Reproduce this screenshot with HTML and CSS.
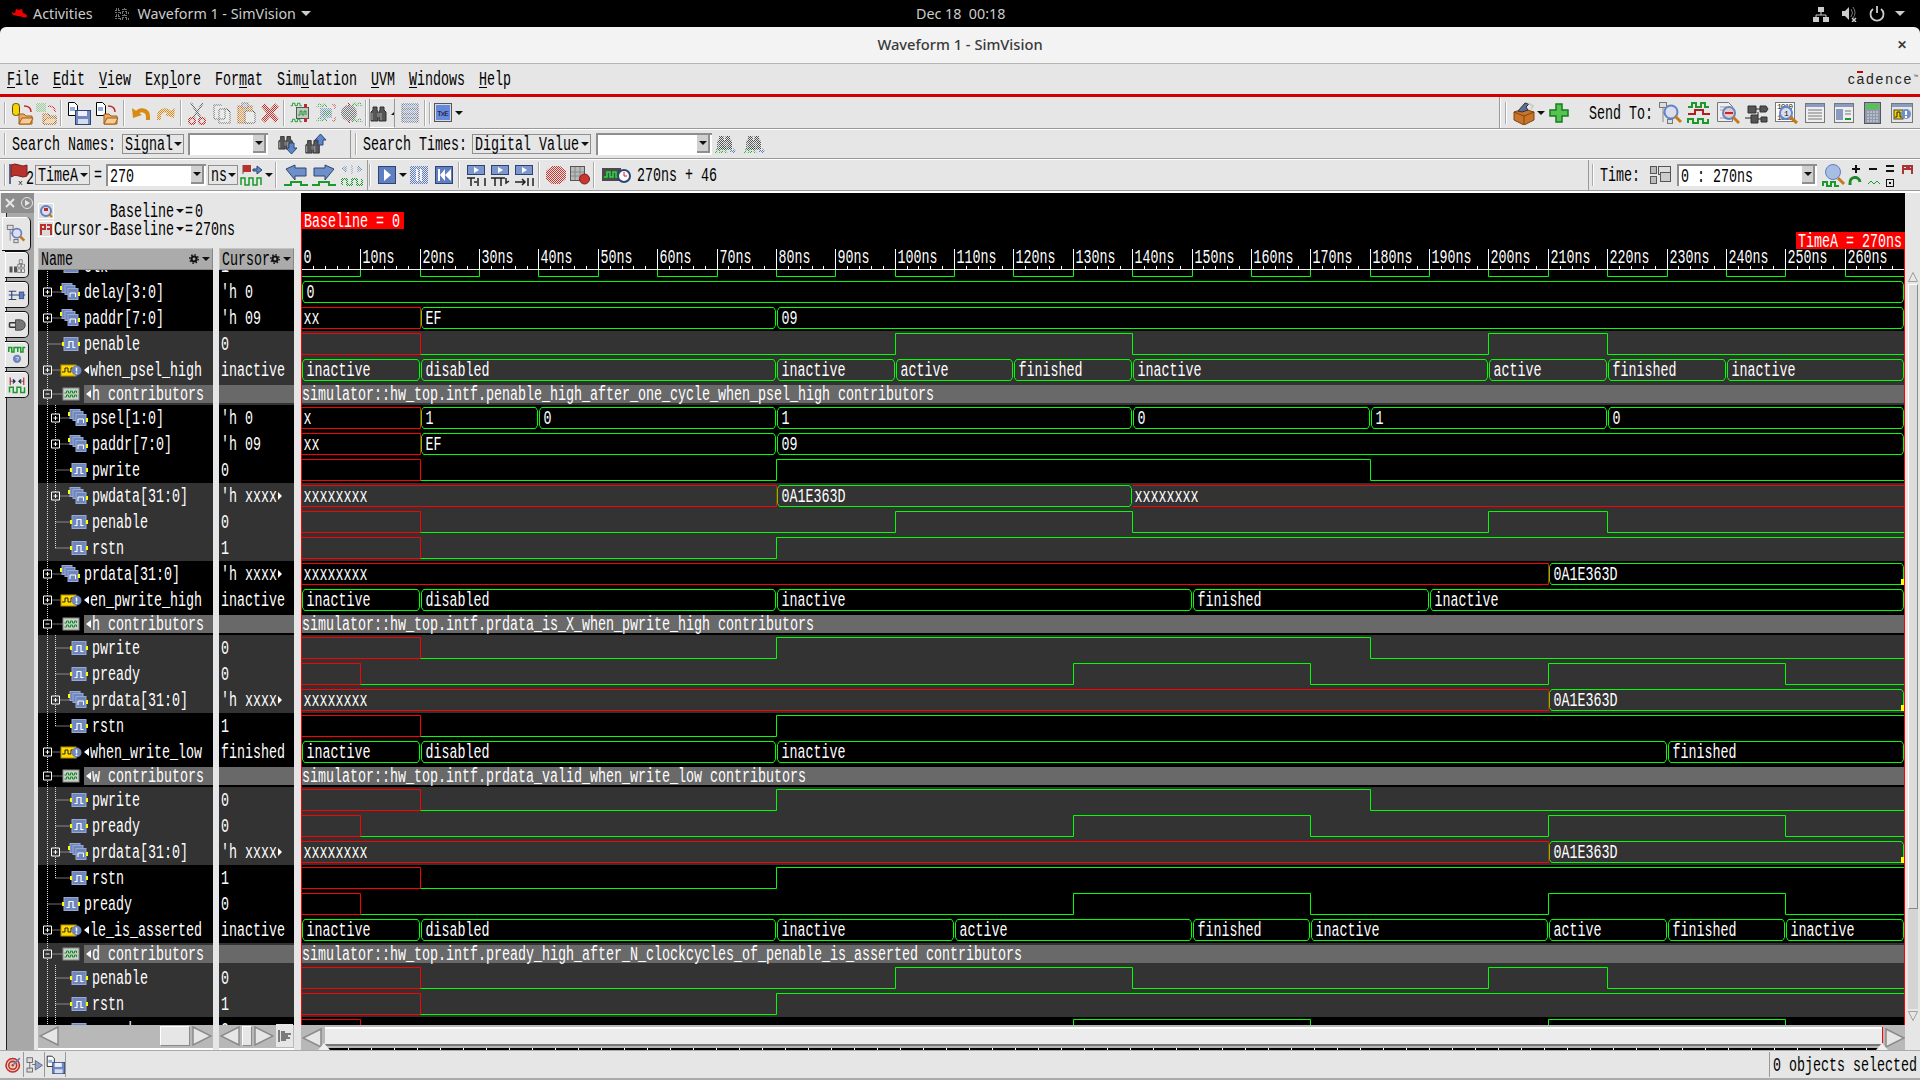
FILE: index.html
```html
<!DOCTYPE html>
<html lang="en">
<head>
    <meta charset="UTF-8">
    <title>Waveform 1 - SimVision</title>
    <link rel="stylesheet" href="styles.css">
</head>
<body>
<svg class="defs" width="0" height="0">
    <defs>
        <pattern id="chk" width="2" height="2" patternUnits="userSpaceOnUse"><rect width="1" height="1" fill="#e6e6e6"/><rect x="1" y="1" width="1" height="1" fill="#e6e6e6"/></pattern>
        <g id="folder"><path d="M9 13h5l2 2h6v8H9z" fill="#eeaa60" stroke="#9c5c18"/><path d="M9 23l3-6h11l-3 6z" fill="#f7cd95" stroke="#9c5c18"/></g>
        <g id="doc"><path d="M1.500 1.500h6l3 3v10h-9z" fill="#fff" stroke="#000"/><rect x="3" y="6" width="5" height="4" fill="#8fb0dc"/></g>
        <g id="binoc"><path d="M4 5h4v3l1 2v9H2v-9l2-2zM11 5h4v3l2 2v9h-7v-9l1-2z" fill="#555" stroke="#333"/><rect x="8" y="11" width="3" height="4" fill="#777"/><path d="M3 11v7M12 11v7" stroke="#aaa"/></g>
        <g id="wavelet"><path d="M1 6h3V2h4v4h4V2h4v4h3" fill="none" stroke="#1a9a2a" stroke-width="1.500"/></g>
    </defs>
    <symbol id="i-opendb" viewBox="0 0 24 24"><rect x="2.500" y="2.500" width="7" height="12" rx="3" fill="#f6d400" stroke="#5a4a10"/><path d="M14 5q7 0 7 6" fill="none" stroke="#c22" stroke-width="1.500"/><use href="#folder"/></symbol>
    <symbol id="i-opendb2" viewBox="0 0 24 24"><rect x="2" y="2" width="10" height="9" fill="#9c9"/><path d="M14 5q7 0 7 6" fill="none" stroke="#c22" stroke-width="1.500"/><use href="#folder"/><rect width="24" height="24" fill="url(#chk)"/></symbol>
    <symbol id="i-save" viewBox="0 0 24 24"><use href="#doc"/><rect x="8.500" y="9.500" width="15" height="14" fill="#7189c0" stroke="#2c4474"/><rect x="11" y="10" width="9" height="5" fill="#eef"/><rect x="11" y="18" width="10" height="5" fill="#d4dcee"/></symbol>
    <symbol id="i-opendoc" viewBox="0 0 24 24"><use href="#doc"/><path d="M13 5q7 0 7 6" fill="none" stroke="#c22" stroke-width="1.500"/><use href="#folder"/></symbol>
    <symbol id="i-undo" viewBox="0 0 24 24"><path d="M19 19v-4a6 6 0 0 0-11-3" fill="none" stroke="#d98a12" stroke-width="4"/><path d="M3 7l1 10 9-3z" fill="#d98a12"/></symbol>
    <symbol id="i-redo" viewBox="0 0 24 24"><path d="M5 19v-4a6 6 0 0 1 11-3" fill="none" stroke="#d98a12" stroke-width="4"/><path d="M21 7l-1 10-9-3z" fill="#d98a12"/><rect width="24" height="24" fill="url(#chk)"/></symbol>
    <symbol id="i-cut" viewBox="0 0 24 24"><path d="M6 2l10 15M18 2L8 17" stroke="#666" stroke-width="2"/><circle cx="7" cy="20" r="3" fill="none" stroke="#c22" stroke-width="2"/><circle cx="17" cy="20" r="3" fill="none" stroke="#c22" stroke-width="2"/><rect width="24" height="24" fill="url(#chk)"/></symbol>
    <symbol id="i-copy" viewBox="0 0 24 24"><path d="M4 4h8l3 3v11H4zM9 8h8l3 3v11H9z" fill="#eee" stroke="#555"/><rect width="24" height="24" fill="url(#chk)"/></symbol>
    <symbol id="i-paste" viewBox="0 0 24 24"><rect x="4" y="5" width="14" height="17" fill="#e79a4a" stroke="#a0611c"/><rect x="8" y="2" width="6" height="5" fill="#bbb" stroke="#666"/><path d="M11 10h8l2 2v10H11z" fill="#eee" stroke="#555"/><rect width="24" height="24" fill="url(#chk)"/></symbol>
    <symbol id="i-del" viewBox="0 0 24 24"><path d="M5 4l14 16M19 4L5 20" stroke="#c5302a" stroke-width="5"/><rect width="24" height="24" fill="url(#chk)"/></symbol>
    <symbol id="i-wavein" viewBox="0 0 24 24"><use href="#wavelet" transform="translate(0 1) scale(.62)"/><use href="#wavelet" transform="translate(0 17) scale(.62)"/><rect x="6.500" y="6.500" width="12" height="11" fill="#c4c8c4" stroke="#555"/><path d="M8 14h2v-4h2v4h2v-4h2v4" fill="none" stroke="#1a9a2a"/><rect x="14" y="3" width="3" height="3" fill="#c22"/><rect x="14" y="18" width="3" height="3" fill="#c22"/></symbol>
    <symbol id="i-wavemid" viewBox="0 0 24 24"><use href="#wavelet" transform="translate(2 2) scale(.6)"/><use href="#wavelet" transform="translate(2 16) scale(.6)"/><rect x="6" y="7" width="12" height="10" fill="#8fa0c8"/><path d="M8 14h2v-4h2v4h2v-4h2v4" fill="none" stroke="#1a9a2a"/><path d="M18 4h3v4M18 20h3v-4" fill="none" stroke="#c22"/><rect width="24" height="24" fill="url(#chk)"/></symbol>
    <symbol id="i-waveout" viewBox="0 0 24 24"><circle cx="10" cy="12" r="8" fill="#777"/><use href="#wavelet" transform="translate(12 1) scale(.6)"/><use href="#wavelet" transform="translate(12 17) scale(.6)"/><path d="M10 2v3M10 19v3" stroke="#c22" stroke-width="2"/><rect width="24" height="24" fill="url(#chk)"/></symbol>
    <symbol id="i-binoc" viewBox="0 0 24 24"><use href="#binoc" transform="translate(2 1)"/></symbol>
    <symbol id="i-grid" viewBox="0 0 24 24"><rect x="4" y="3" width="16" height="18" fill="#9db0cc" stroke="#667"/><path d="M4 8h16M4 13h16M4 17h16" stroke="#667"/><rect width="24" height="24" fill="url(#chk)"/></symbol>
    <symbol id="i-bdown" viewBox="0 0 24 24"><use href="#binoc" transform="translate(2 0) scale(.9)"/><path d="M14 11h5v5h3l-5.500 6-5.500-6h3z" fill="#5f86c6" stroke="#2c4474"/></symbol>
    <symbol id="i-bup" viewBox="0 0 24 24"><use href="#binoc" transform="translate(1 4) scale(.9)"/><path d="M15 13h5V8h3l-5.500-6L12 8h3z" fill="#5f86c6" stroke="#2c4474"/></symbol>
    <symbol id="i-bwd" viewBox="0 0 24 24"><use href="#binoc" transform="translate(2 0) scale(.9)"/><use href="#wavelet" transform="translate(0 16) scale(.7)"/><path d="M16 18h3v-2l3 3-3 3v-2h-3z" fill="#5f86c6"/><rect width="24" height="24" fill="url(#chk)"/></symbol>
    <symbol id="i-flagwave" viewBox="0 0 24 24"><path d="M3 2v9" stroke="#555"/><path d="M3 2h8v7H3z" fill="#b8312c"/><path d="M13 6h4V3l5 4-5 4V8h-4z" fill="#5f86c6" stroke="#2c4474"/><path d="M1 22v-7h4v7h4v-7h4v7h4v-7h4v7" fill="none" stroke="#1a9a2a" stroke-width="1.500"/></symbol>
    <symbol id="i-prev" viewBox="0 0 24 24"><path d="M2 4l9-4v3h11v8H11v4z" transform="translate(0 2)" fill="#6f8fc8" stroke="#2c4474"/><path d="M0 22h7v-3h10v3h7" fill="none" stroke="#1a9a2a" stroke-width="2"/></symbol>
    <symbol id="i-next" viewBox="0 0 24 24"><path d="M22 4l-9-4v3H2v8h11v4z" transform="translate(0 2)" fill="#6f8fc8" stroke="#2c4474"/><path d="M0 22h7v-3h10v3h7" fill="none" stroke="#1a9a2a" stroke-width="2"/></symbol>
    <symbol id="i-nextoff" viewBox="0 0 24 24"><path d="M2 6l4-3v6zM22 6l-4-3v6zM12 2v9" stroke="#5f86c6" fill="#9db0cc"/><path d="M2 22v-6h5v6h5v-6h5v6h5v-6" fill="none" stroke="#1a9a2a" stroke-width="2"/><rect width="24" height="24" fill="url(#chk)"/></symbol>
    <symbol id="i-play" viewBox="0 0 24 24"><rect x="3.500" y="3.500" width="17" height="17" fill="#5f7fc0" stroke="#2c4474"/><path d="M9 6l7 6-7 6z" fill="#fff"/></symbol>
    <symbol id="i-pause" viewBox="0 0 24 24"><rect x="3" y="3" width="18" height="18" fill="#5f7fc0"/><path d="M9 6h2v12H9zM13 6h2v12h-2z" fill="#fff"/><rect width="24" height="24" fill="url(#chk)"/></symbol>
    <symbol id="i-rew" viewBox="0 0 24 24"><rect x="3.500" y="3.500" width="17" height="17" fill="#5f7fc0" stroke="#2c4474"/><path d="M6 6h2v12H6zM13 6v12l-5-6zM19 6v12l-6-6z" fill="#fff"/></symbol>
    <symbol id="i-step1" viewBox="0 0 24 24"><rect x="3.500" y="2.500" width="17" height="9" fill="#7d97cc" stroke="#2c4474"/><path d="M10 4l5 3-5 3z" fill="#fff"/><path d="M3 15h8M7 15v8M14 15v8M21 15v8M10 19h3" stroke="#222" stroke-width="1.500"/></symbol>
    <symbol id="i-step2" viewBox="0 0 24 24"><rect x="3.500" y="2.500" width="17" height="9" fill="#7d97cc" stroke="#2c4474"/><path d="M10 4l5 3-5 3z" fill="#fff"/><path d="M3 15h14M7 15v8M13 15v8M18 15v5l3-2" stroke="#222" stroke-width="1.500" fill="none"/></symbol>
    <symbol id="i-step3" viewBox="0 0 24 24"><rect x="3.500" y="2.500" width="17" height="9" fill="#7d97cc" stroke="#2c4474"/><path d="M10 4l5 3-5 3z" fill="#fff"/><path d="M3 19h10M10 16l3 3-3 3M16 15v8M21 15v8" stroke="#222" stroke-width="1.500" fill="none"/></symbol>
    <symbol id="i-stop" viewBox="0 0 24 24"><path d="M8 3h8l6 5v8l-6 5H8l-6-5V8z" fill="#c9352f"/><rect width="24" height="24" fill="url(#chk)"/></symbol>
    <symbol id="i-bp" viewBox="0 0 24 24"><rect x="2.500" y="3.500" width="14" height="14" fill="#bbb" stroke="#555"/><path d="M7 4v13M12 4v13M3 9h13M3 13h13" stroke="#888"/><circle cx="16.500" cy="16" r="5" fill="#c9352f" stroke="#7a1e1c"/></symbol>
    <symbol id="i-simtime" viewBox="0 0 36 24"><rect x="2" y="5" width="19" height="13" fill="#4b4b4b"/><path d="M4 14h3v-5h3v5h3v-5h3v5h3" fill="none" stroke="#20e040" stroke-width="1.500"/><circle cx="24" cy="13" r="6" fill="#fff" stroke="#2c4474" stroke-width="2"/><path d="M24 9v4h3" stroke="#c22" fill="none"/></symbol>
    <symbol id="i-toolbox" viewBox="0 0 24 24"><path d="M2 11l10-3 10 3v8l-10 5-10-5z" fill="#c9742a" stroke="#7a4412"/><path d="M2 11l10 4 10-4M12 15v9" stroke="#7a4412" fill="none"/><path d="M6 10l7-8 4 1-3 3 2 3-6 2z" fill="#5d6d95" stroke="#333"/><path d="M16 2l5 3-2 3" stroke="#ccc" stroke-width="2" fill="none"/></symbol>
    <symbol id="i-plus" viewBox="0 0 24 24"><path d="M9 3h6v6h6v6h-6v6H9v-6H3V9h6z" fill="#52c44f" stroke="#1a7a22" stroke-width="1.500"/></symbol>
    <symbol id="i-s1" viewBox="0 0 24 24"><path d="M5 5v16M5 12h7" stroke="#888"/><rect x="1.500" y="1.500" width="7" height="5" fill="#ddd" stroke="#777"/><rect x="9.500" y="18.500" width="5" height="4" fill="#ddd" stroke="#777"/><circle cx="13" cy="11" r="6.500" fill="#dde" stroke="#5f86c6" stroke-width="2"/><path d="M17 15l6 6" stroke="#c47a1a" stroke-width="3"/></symbol>
    <symbol id="i-s2" viewBox="0 0 24 24"><path d="M1 6h4V2h4v4h5V2h4v4h4" fill="none" stroke="#1a9a2a" stroke-width="2"/><path d="M1 13h7V9h8v4h7" fill="none" stroke="#b02020" stroke-width="2"/><path d="M1 22v-4h5v4h5v-4h5v4h5v-4" fill="none" stroke="#1a9a2a" stroke-width="2"/></symbol>
    <symbol id="i-s3" viewBox="0 0 24 24"><path d="M1.500 1.500h11l4 4v15h-15z" fill="#eee" stroke="#777"/><path d="M4 6h7M4 9h9M4 17h6" stroke="#99a"/><circle cx="13" cy="12" r="6" fill="#e8c8c8" stroke="#5f86c6" stroke-width="2"/><path d="M9 12h8" stroke="#c22" stroke-width="2"/><path d="M17 16l6 6" stroke="#c47a1a" stroke-width="3"/></symbol>
    <symbol id="i-s4" viewBox="0 0 24 24"><path d="M3 5h8v7H3zM15 5h6l2 3-2 3h-6zM6 14h7v8H6zM16 16h6v5h-6z" fill="#555" stroke="#333"/><path d="M11 8h4M13 14v-3M0 17h6M13 18h3" stroke="#222"/></symbol>
    <symbol id="i-s6" viewBox="0 0 24 24"><rect x="2.500" y="2.500" width="19" height="19" fill="#eee" stroke="#777"/><rect x="3" y="3" width="18" height="3" fill="#8a9ac0"/><path d="M5 9h14M5 12h14M5 15h14M5 18h14" stroke="#777"/></symbol>
    <symbol id="i-s7" viewBox="0 0 24 24"><rect x="2.500" y="2.500" width="19" height="19" fill="#eee" stroke="#777"/><rect x="3" y="3" width="18" height="3" fill="#8a9ac0"/><rect x="4" y="8" width="7" height="11" fill="#8a9ac0"/><path d="M13 10h6M13 13h6M13 18h6" stroke="#777"/><path d="M13 18h6" stroke="#1a9a2a" stroke-width="2"/></symbol>
    <symbol id="i-s8" viewBox="0 0 24 24"><rect x="3.500" y="1.500" width="16" height="21" fill="#8f9aa8" stroke="#556"/><rect x="5" y="3" width="13" height="5" fill="#52c44f"/><path d="M6 11h11M6 14h11M6 17h11M6 20h11" stroke="#dde" stroke-dasharray="2 1"/></symbol>
    <symbol id="i-s9" viewBox="0 0 24 24"><rect x="1.500" y="2.500" width="21" height="19" fill="#e6e6e6" stroke="#777"/><rect x="2" y="3" width="20" height="3" fill="#8a9ac0"/><rect x="4" y="9" width="9" height="9" fill="#f6d400" stroke="#444"/><path d="M5 16h2v-5h3v5h2" fill="none" stroke="#222"/><circle cx="16" cy="13" r="5" fill="#6f8fc8"/><path d="M16 10v4M16 15v2" stroke="#fff" stroke-width="2"/></symbol>
    <symbol id="i-timeopt" viewBox="0 0 24 24"><rect x="2.500" y="3.500" width="6" height="7" fill="#bbb" stroke="#555"/><rect x="2.500" y="13.500" width="6" height="7" fill="#bbb" stroke="#555"/><rect x="10.500" y="3.500" width="12" height="8" fill="#ddd" stroke="#555"/><rect x="12.500" y="9.500" width="10" height="9" fill="#ccc" stroke="#555"/></symbol>
    <symbol id="i-zoom" viewBox="0 0 24 24"><circle cx="11" cy="9" r="7.500" fill="#a8bde4" stroke="#5f7fc0"/><path d="M16 15l6 6" stroke="#c47a1a" stroke-width="3"/><path d="M1 23v-4h4v4h4v-4h4v4h4" fill="none" stroke="#1a9a2a" stroke-width="2"/></symbol>
    <symbol id="i-zoomset" viewBox="0 0 72 24"><path d="M6 6h8M10 2v8M23 6h8M40 3h8M40 8h8" stroke="#111" stroke-width="2"/><path d="M57 2v9M57 3h4v3h-4" stroke="#a33" stroke-width="2" fill="none"/><path d="M66 2v9M66 3h-3v3h3" stroke="#a33" stroke-width="2" fill="none"/><path d="M4 22v-2a5 5 0 0 1 10-1" fill="none" stroke="#1a8a2a" stroke-width="3"/><path d="M22 21l3-3 3 3 3-3 3 3" fill="none" stroke="#1a9a2a"/><rect x="40.500" y="16.500" width="7" height="7" fill="none" stroke="#111"/><rect x="43" y="19" width="2" height="2" fill="#111"/></symbol>
    <symbol id="i-target" viewBox="0 0 24 24"><circle cx="11" cy="13" r="8.500" fill="#e8d0c0" stroke="#c0302a" stroke-width="2"/><circle cx="11" cy="13" r="5" fill="none" stroke="#c0302a" stroke-width="2"/><circle cx="11" cy="13" r="1.500" fill="#c0302a"/><path d="M12 12l8-8" stroke="#5f7fc0" stroke-width="2"/></symbol>
    <symbol id="i-netlink" viewBox="0 0 24 24"><rect x="2.500" y="3.500" width="7" height="6" fill="#ddd" stroke="#555"/><rect x="2.500" y="16.500" width="7" height="5" fill="#ddd" stroke="#555"/><path d="M6 10v7M9 12h6" stroke="#555"/><path d="M13 7l9 6-9 6z" fill="#8fa3cf" stroke="#556"/></symbol>
    <symbol id="i-sig" viewBox="0 0 24 24"><rect x="5" y="5.500" width="14" height="13" fill="#6f86bd" stroke="#98aad4"/><path d="M7.500 15.500h2.500v-6h4v6h2.500" fill="none" stroke="#fff" stroke-width="1.200"/><rect x="3" y="10" width="2" height="4" fill="#ff0"/><rect x="19" y="10" width="2" height="4" fill="#ff0"/></symbol>
    <symbol id="i-bus" viewBox="0 0 24 24"><rect x="4" y="3.500" width="10" height="9" fill="#6f86bd" stroke="#98aad4"/><rect x="7" y="5.500" width="10" height="9" fill="#6f86bd" stroke="#98aad4"/><rect x="10" y="8.500" width="10" height="11" fill="#6f86bd" stroke="#98aad4"/><path d="M12 17v-4h5.500v4" fill="none" stroke="#fff"/><rect x="2" y="6" width="2" height="4" fill="#ff0"/><rect x="20" y="12" width="2" height="4" fill="#ff0"/></symbol>
    <symbol id="i-assert" viewBox="0 0 24 24"><rect x="2" y="7" width="15" height="11" fill="#ffd800" stroke="#b89000"/><path d="M3 14h3v-4h3v4h3v-4h3v4" fill="none" stroke="#222"/><circle cx="17.500" cy="12.500" r="5" fill="#6f86bd"/><path d="M17.500 9.500v4M17.500 14.500v1.500" stroke="#fff" stroke-width="1.500"/></symbol>
    <symbol id="i-group" viewBox="0 0 24 24"><rect x="4" y="6" width="16" height="12" fill="#c9d0c9" stroke="#888"/><path d="M5.500 11h2v-2h2v2h2v-2h2v2h2v-2h2v2M5.500 15h2v-2h2v2h2v-2h2v2h2v-2h2v2" fill="none" stroke="#148a28"/></symbol>
    <symbol id="i-tab1" viewBox="0 0 24 24"><path d="M5 4v16M5 11h6" stroke="#777"/><rect x="1.500" y="1.500" width="7" height="5" fill="#ddd" stroke="#666"/><rect x="9.500" y="18.500" width="5" height="4" fill="#ddd" stroke="#666"/><circle cx="13" cy="11" r="5.500" fill="#dde" stroke="#5f7fc0" stroke-width="2"/><path d="M17 15l5 5" stroke="#c47a1a" stroke-width="3"/></symbol>
    <symbol id="i-tab2" viewBox="0 0 24 24"><path d="M2 14h4v8H2zM8 14h4v8H8z" fill="#555"/><path d="M13 11h4v4h-4zM18 11h4v4h-4zM13 17h4v5h-4zM18 17h4v5h-4zM15 5h4v5h-4z" fill="none" stroke="#666"/></symbol>
    <symbol id="i-tab3" viewBox="0 0 24 24"><path d="M1 7h10M1 12h22M1 18h10M5 7v11" stroke="#2c4474" stroke-width="1.500"/><rect x="15" y="8" width="6" height="9" fill="#5f7fc0" stroke="#2c4474"/></symbol>
    <symbol id="i-tab4" viewBox="0 0 24 24"><path d="M10 5h6a7 7 0 0 1 0 14h-6z" fill="#777" stroke="#333"/><path d="M2 9h8M2 15h8M2 9v6" stroke="#333" stroke-width="2"/></symbol>
    <symbol id="i-tab6" viewBox="0 0 24 24"><path d="M3 2v10M21 2v10" stroke="#c22" stroke-width="1.500"/><path d="M3 7h6M21 7h-6M10 7l-3-3v6zM14 7l3-3v6z" stroke="#2c4474"/><path d="M2 22v-7h5v7h5v-7h5v7h5v-7" fill="none" stroke="#1a9a2a" stroke-width="2"/></symbol>
    <symbol id="i-arrl" viewBox="0 0 20 20"><path d="M19 1L1 10l18 9z" fill="#e6e6e6" stroke="#8a8a8a" stroke-width="1.500"/></symbol>
    <symbol id="i-arrr" viewBox="0 0 20 20"><path d="M1 1l18 9-18 9z" fill="#e6e6e6" stroke="#8a8a8a" stroke-width="1.500"/></symbol>
    <symbol id="i-gear" viewBox="0 0 14 14"><circle cx="7" cy="7" r="3.500" fill="none" stroke="#111" stroke-width="3"/><circle cx="7" cy="7" r="6" fill="none" stroke="#111" stroke-width="2" stroke-dasharray="2 2.700"/></symbol>
    <symbol id="i-align" viewBox="0 0 14 14"><path d="M1 1v12M3 3h4M3 5h10M3 7h7M3 9h9M3 11h5" stroke="#111"/></symbol>
</svg>

<header class="topbar">
    <div class="tb-left">
        <svg class="hat" viewBox="0 0 16 12"><path d="M4 5l1-4 3 1 3-1 1 4c3 1 4 2 4 3 0 3-4 1-8 0-3 0-8-1-7-4 1 1 2 1 3 1z" fill="#e00"/></svg>
        <span>Activities</span>
        <svg class="appicon" viewBox="0 0 16 14"><path d="M1 6V2h3v4h4V2h3v4h4M1 12V8h3v4h4V8h3v4h4" fill="none" stroke="#999" stroke-dasharray="1 1" stroke-width="1.500"/></svg>
        <span>Waveform 1 - SimVision</span>
        <i class="dn dn-l"></i>
    </div>
    <div class="tb-clock">Dec 18&nbsp; 00:18</div>
    <div class="tb-right">
        <svg class="sys" viewBox="0 0 16 16"><path d="M5 1h6v5H5zM0 11h6v5H0zM10 11h6v5h-6z" fill="#ccc"/><path d="M8 6v3M3 11V9h10v2" fill="none" stroke="#ccc"/></svg>
        <svg class="sys" viewBox="0 0 16 16"><path d="M1 5h3l4-4v13l-4-4H1z" fill="#ccc"/><path d="M10 3q3 4 0 8M12 1q4 6 0 11" fill="none" stroke="#777"/><path d="M11 12l4 4M15 12l-4 4" stroke="#ccc" stroke-width="1.500"/></svg>
        <svg class="sys" viewBox="0 0 16 16"><path d="M4 3a6.500 6.500 0 1 0 8 0M8 0v7" fill="none" stroke="#ccc" stroke-width="1.800"/></svg>
        <i class="dn dn-l dn-sys"></i>
    </div>
</header>

<div class="titlebar">
    <span>Waveform 1 - SimVision</span>
    <span class="close">&#10005;</span>
</div>

<nav class="menubar">
    <span class="lab"><u>F</u>ile</span>
    <span class="lab"><u>E</u>dit</span>
    <span class="lab"><u>V</u>iew</span>
    <span class="lab">Exp<u>l</u>ore</span>
    <span class="lab">For<u>m</u>at</span>
    <span class="lab">Sim<u>u</u>lation</span>
    <span class="lab"><u>U</u>VM</span>
    <span class="lab"><u>W</u>indows</span>
    <span class="lab"><u>H</u>elp</span>
    <span class="logo">c<span class="logo-a">a</span>dence<sup>&trade;</sup></span>
</nav>
<div class="redline"></div>

<div class="tbar tbar-first">
    <div class="tgroup grow">
        <i class="handle"></i><i class="s4"></i>
        <svg class="ic"><use href="#i-opendb"/></svg><svg class="ic"><use href="#i-opendb2"/></svg>
        <i class="s2"></i><i class="sep"></i><i class="s5"></i>
        <svg class="ic"><use href="#i-save"/></svg><i class="s4"></i><svg class="ic"><use href="#i-opendoc"/></svg>
        <i class="s4"></i><i class="sep"></i><i class="s4"></i>
        <svg class="ic"><use href="#i-undo"/></svg><i class="s1"></i><svg class="ic"><use href="#i-redo"/></svg>
        <i class="s2"></i><i class="sep"></i><i class="s3"></i>
        <svg class="ic"><use href="#i-cut"/></svg><i class="s1"></i><svg class="ic"><use href="#i-copy"/></svg><svg class="ic"><use href="#i-paste"/></svg><svg class="ic"><use href="#i-del"/></svg>
        <i class="s1"></i><i class="sep"></i><i class="s5"></i>
        <svg class="ic"><use href="#i-wavein"/></svg><svg class="ic"><use href="#i-wavemid"/></svg><i class="s1"></i><svg class="ic"><use href="#i-waveout"/></svg>
        <i class="s2"></i><i class="sep"></i><i class="s2"></i>
        <span class="raised"><svg class="ic"><use href="#i-binoc"/></svg><i class="up"></i></span>
        <i class="s3"></i><svg class="ic"><use href="#i-grid"/></svg>
        <i class="s2"></i><i class="sep"></i><i class="s3"></i><i class="handle"></i>
        <svg class="ic" viewBox="0 0 24 24"><rect x="3.500" y="2.500" width="17" height="18" fill="#dbdbdb" stroke="#555"/><rect x="5" y="4" width="14" height="15" fill="#6688dd"/><text x="6" y="15" class="micro" textLength="12">TxE</text></svg><i class="dn"></i>
    </div>
    <div class="tgroup right-a">
        <i class="handle"></i><i class="s5"></i>
        <svg class="ic"><use href="#i-toolbox"/></svg><i class="s1"></i><i class="dn"></i><i class="s2"></i>
        <svg class="ic"><use href="#i-plus"/></svg><i class="s18"></i>
        <span class="lab">Send To:</span><i class="s5"></i>
        <div class="sendto">
            <svg class="ic"><use href="#i-s1"/></svg><svg class="ic"><use href="#i-s2"/></svg><svg class="ic"><use href="#i-s3"/></svg>
            <svg class="ic"><use href="#i-s4"/></svg>
            <svg class="ic" viewBox="0 0 24 24"><rect x="1.500" y="1.500" width="19" height="19" fill="#fff" stroke="#777"/><text x="3" y="8" class="micro" textLength="16">1010</text><text x="3" y="19" class="micro" textLength="16">1010</text><circle cx="12" cy="12" r="6" fill="#dde" stroke="#5f86c6" stroke-width="2"/><text x="10" y="15" class="micro" textLength="4">1</text><path d="M16 16l7 6" stroke="#c47a1a" stroke-width="3"/></svg>
            <svg class="ic"><use href="#i-s6"/></svg>
            <svg class="ic"><use href="#i-s7"/></svg><svg class="ic"><use href="#i-s8"/></svg><svg class="ic"><use href="#i-s9"/></svg>
        </div>
    </div>
</div>

<div class="tbar">
    <div class="tgroup gr-names">
        <i class="handle"></i><i class="s6"></i>
        <span class="lab">Search Names:</span><i class="s6"></i>
        <span class="sel w62"><span class="lab">Signal</span><i class="dn"></i></span><i class="s4"></i>
        <span class="combo w80"><span class="drop"><i class="dn"></i></span></span><i class="s7"></i>
        <svg class="ic"><use href="#i-bdown"/></svg><i class="s4"></i><svg class="ic"><use href="#i-bup"/></svg>
    </div>
    <div class="tgroup grow gr-times">
        <i class="handle"></i><i class="s6"></i>
        <span class="lab">Search Times:</span><i class="s5"></i>
        <span class="sel w119"><span class="lab">Digital Value</span><i class="dn"></i></span><i class="s5"></i>
        <span class="combo w116"><span class="drop"><i class="dn"></i></span></span><i class="s2"></i>
        <svg class="ic"><use href="#i-bwd"/></svg><i class="s5"></i><svg class="ic"><use href="#i-bwd"/></svg>
    </div>
</div>

<div class="tbar">
    <div class="tgroup gr-time">
        <i class="handle"></i><i class="s2"></i>
        <span class="flagbox">
            <svg class="ic" viewBox="0 0 24 24"><path d="M2 1v20" stroke="#5a6a90" stroke-width="2"/><path d="M3 2q4-2 8 0t8 0v11q-4 2-8 0t-8 1z" fill="#b8312c" stroke="#7a1e1c"/><text x="10" y="22" class="micro" textLength="6">x</text></svg>
            <span class="lab">2</span>
        </span>
        <span class="sel w55"><span class="lab">TimeA</span><i class="dn"></i></span><i class="s4"></i>
        <span class="lab">=</span><i class="s4"></i>
        <span class="combo w100"><span class="lab">270</span><span class="drop"><i class="dn"></i></span></span><i class="s2"></i>
        <span class="sel w30"><span class="lab">ns</span><i class="dn"></i></span><i class="s2"></i>
        <svg class="ic"><use href="#i-flagwave"/></svg><i class="s1"></i><i class="dn"></i>
        <i class="s2"></i><i class="sep"></i><i class="s7"></i>
        <svg class="ic"><use href="#i-prev"/></svg><i class="s4"></i><svg class="ic"><use href="#i-next"/></svg><i class="s4"></i><svg class="ic"><use href="#i-nextoff"/></svg>
    </div>
    <div class="tgroup grow flush">
        <i class="s1"></i><i class="handle"></i><i class="s4"></i>
        <svg class="ic"><use href="#i-play"/></svg><i class="dn"></i>
        <svg class="ic"><use href="#i-pause"/></svg><i class="s1"></i><svg class="ic"><use href="#i-rew"/></svg>
        <i class="s2"></i><i class="sep"></i><i class="s4"></i>
        <svg class="ic"><use href="#i-step1"/></svg><svg class="ic"><use href="#i-step2"/></svg><svg class="ic"><use href="#i-step3"/></svg>
        <i class="s2"></i><i class="sep"></i><i class="s4"></i>
        <svg class="ic"><use href="#i-stop"/></svg><svg class="ic"><use href="#i-bp"/></svg>
        <i class="s1"></i><i class="sep"></i><i class="s5"></i>
        <svg class="ic w36"><use href="#i-simtime"/></svg><i class="s1"></i>
        <span class="lab">270ns + 46</span>
    </div>
    <div class="tgroup right-b">
        <i class="s3"></i><i class="handle"></i><i class="s6"></i>
        <span class="lab">Time:</span><i class="s8"></i>
        <svg class="ic"><use href="#i-timeopt"/></svg><i class="s5"></i>
        <span class="combo w140"><span class="lab">0 : 270ns</span><span class="drop"><i class="dn"></i></span></span><i class="s5"></i>
        <svg class="ic"><use href="#i-zoom"/></svg>
        <svg class="ic w72"><use href="#i-zoomset"/></svg>
    </div>
</div>

<main class="main">
    <aside class="tabs">
        <div class="tabs-top">
            <svg viewBox="0 0 30 16" class="tabs-ctl"><path d="M3 4l8 8M11 4l-8 8" stroke="#e6e6e6" stroke-width="2"/><circle cx="24" cy="8" r="5.500" fill="none" stroke="#e6e6e6"/><path d="M22 5l5 3-5 3z" fill="#e6e6e6"/></svg>
        </div>
        <div class="tab active"><svg class="ic"><use href="#i-tab1"/></svg></div>
        <div class="tab"><svg class="ic"><use href="#i-tab2"/></svg></div>
        <div class="tab"><svg class="ic"><use href="#i-tab3"/></svg></div>
        <div class="tab"><svg class="ic"><use href="#i-tab4"/></svg></div>
        <div class="tab">
            <svg class="ic" viewBox="0 0 24 24"><path d="M1 8V2h4v6h3V2h4M13 8V2h4v6h3V2h3" fill="none" stroke="#1a9a2a" stroke-width="2"/><circle cx="12" cy="17" r="5.500" fill="#6f86bd"/><text x="10" y="20" class="micro light">?</text></svg>
        </div>
        <div class="tab"><svg class="ic"><use href="#i-tab6"/></svg></div>
    </aside>

    <section class="signals">
        <div class="cursors">
            <div class="cur-row">
                <i class="curicon"><svg viewBox="0 0 14 14"><circle cx="7" cy="7" r="5" fill="#dde" stroke="#5f7fc0" stroke-width="2"/><path d="M5 4h4v3H5z" fill="#b8312c"/><path d="M10 10l3 3" stroke="#c47a1a" stroke-width="2"/></svg></i>
                <span class="cur-name"><span class="lab">Baseline</span></span><i class="dn"></i><span class="lab">=</span><i class="s2"></i><span class="lab">0</span>
            </div>
            <div class="cur-row">
                <i class="curicon"><svg viewBox="0 0 14 14"><path d="M2 2v11M2 3h4v4H2M8 3h4v4H8M12 3v10" fill="none" stroke="#b8312c" stroke-width="2"/></svg></i>
                <span class="cur-name"><span class="lab">Cursor-Baseline</span></span><i class="dn"></i><span class="lab">=</span><i class="s2"></i><span class="lab">270ns</span>
            </div>
        </div>
        <div class="lists">
            <div class="col col-name">
                <div class="col-head"><span class="lab">Name</span><svg class="gear"><use href="#i-gear"/></svg><i class="dn"></i></div>
                <div class="col-body" id="names"></div>
                <div class="hscroll">
                    <svg class="arrow"><use href="#i-arrl"/></svg>
                    <span class="fill"></span>
                    <span class="thumb"></span>
                    <svg class="arrow"><use href="#i-arrr"/></svg>
                </div>
            </div>
            <div class="col col-cursor">
                <div class="col-head"><span class="lab">Cursor</span><svg class="gear"><use href="#i-gear"/></svg><i class="dn"></i></div>
                <div class="col-body" id="values"></div>
                <div class="hscroll">
                    <svg class="arrow"><use href="#i-arrl"/></svg>
                    <span class="thumb thumb-s"></span>
                    <svg class="arrow"><use href="#i-arrr"/></svg>
                    <span class="alignbtn"><svg class="gear"><use href="#i-align"/></svg></span>
                </div>
            </div>
        </div>
    </section>

    <section class="waves">
        <div class="ruler" id="ruler">
            <span class="flagbar baseline"><span class="lab">Baseline = 0</span></span>
            <span class="flagbar timea"><span class="lab">TimeA = 270ns</span></span>
        </div>
        <div class="wave-body" id="waves"></div>
        <div class="hscroll wave-scroll">
            <svg class="arrow"><use href="#i-arrl"/></svg>
            <span class="wave-thumb"></span>
            <svg class="arrow"><use href="#i-arrr"/></svg>
            <i class="wave-ticks"></i>
            <i class="range-mark mark-l"></i>
            <i class="range-mark mark-r"></i>
        </div>
        <i class="vline vline-base"></i>
        <i class="vline vline-cursor"></i>
        <i class="vline vline-range"></i>
    </section>

    <div class="vscroll">
        <svg class="varrow"><use href="#i-arrr"/></svg>
        <span class="vthumb"></span>
        <span class="vtrack"></span>
        <svg class="varrow varrow-dn"><use href="#i-arrr"/></svg>
    </div>
</main>

<footer class="status">
    <span class="st-cell"><svg class="ic"><use href="#i-target"/></svg></span>
    <span class="st-cell"><svg class="ic"><use href="#i-netlink"/></svg></span>
    <span class="st-cell"><svg class="ic"><use href="#i-save"/></svg></span>
    <span class="st-msg"><span class="lab">0 objects selected</span></span>
</footer>

<script src="waves.js"></script>
</body>
</html>
```

FILE: styles.css
```css
* {
    box-sizing: border-box;
}

body {
    margin: 0;
    width: 1920px;
    height: 1080px;
    overflow: hidden;
    background-color: #000;
    font-family: "Liberation Mono", monospace;
    color: #000;
}

i {
    display: block;
    flex: none;
}

u {
    text-decoration-thickness: 1px;
    text-underline-offset: 2px;
}

.defs {
    position: absolute;
}

.micro {
    font: 8px "Liberation Mono", monospace;
    fill: #111;
}

.light {
    fill: #fff;
}

/* every label is a tall narrow 8px-per-character cell, width is set in waves.js */
.lab {
    display: inline-block;
    flex: none;
    font-size: 20px;
    line-height: 20px;
    white-space: pre;
    transform: translateY(1px) scaleX(0.6665);
    transform-origin: 0 50%;
}

/* spacers */
.s1 { width: 1px; }
.s2 { width: 2px; }
.s3 { width: 3px; }
.s4 { width: 4px; }
.s5 { width: 5px; }
.s6 { width: 6px; }
.s7 { width: 7px; }
.s8 { width: 8px; }
.s18 { width: 18px; }

.dn {
    width: 0;
    height: 0;
    border-left: 4px solid transparent;
    border-right: 4px solid transparent;
    border-top: 4px solid #111;
}

.up {
    width: 0;
    height: 0;
    border-left: 4px solid transparent;
    border-right: 4px solid transparent;
    border-bottom: 4px solid #111;
}

.topbar {
    height: 27px;
    display: flex;
    align-items: center;
    justify-content: space-between;
    position: relative;
    color: #ccc;
    font: 14.3px "Noto Sans", sans-serif;
}

.tb-left {
    display: flex;
    align-items: center;
    padding-left: 11px;
}

.hat {
    width: 16px;
    height: 12px;
    margin-right: 6px;
}

.appicon {
    width: 16px;
    height: 14px;
    margin: 0 7px 0 22px;
}

.dn-l {
    border-top-color: #ccc;
    border-left-width: 5px;
    border-right-width: 5px;
    border-top-width: 5px;
    margin-left: 5px;
}

.dn-sys {
    margin-left: -2px;
}

.tb-clock {
    position: absolute;
    left: 916px;
}

.tb-right {
    display: flex;
    align-items: center;
    gap: 12px;
    padding-right: 15px;
}

.sys {
    width: 16px;
    height: 16px;
}

.titlebar {
    height: 37px;
    display: flex;
    align-items: center;
    justify-content: center;
    position: relative;
    padding-bottom: 2px;
    background-color: #f3f3f3;
    border-bottom: 1px solid #b4b4b0;
    border-radius: 6px 6px 0 0;
    color: #3a3a3a;
    font: 500 14.7px "Noto Sans", sans-serif;
}

.close {
    position: absolute;
    right: 13px;
    font-size: 12px;
    font-weight: 700;
}

.menubar {
    height: 30px;
    display: flex;
    align-items: center;
    gap: 14px;
    padding-left: 7px;
    background-color: #e6e6e6;
}

.logo {
    margin-left: auto;
    padding-right: 0;
    font: 14px "Liberation Sans", sans-serif;
    letter-spacing: 1.8px;
    color: #222;
}

.logo sup {
    font-size: 5px;
}

.logo-a {
    position: relative;
}

.logo-a::before {
    content: "";
    position: absolute;
    left: 1px;
    right: 3px;
    top: 0;
    height: 2px;
    background-color: #c00;
}

.redline {
    height: 3px;
    background-color: #d40000;
}

.tbar {
    height: 30px;
    display: flex;
    background-color: #e6e6e6;
    border-top: 1px solid #fff;
    border-bottom: 1px solid #999;
}

.tbar-first {
    height: 32px;
    border-top: 0;
}

.tbar:last-of-type {
    height: 32px;
}

.tgroup {
    display: flex;
    align-items: center;
    flex: none;
    border-right: 1px solid #999;
    padding-left: 4px;
}

.grow {
    flex: 1;
    min-width: 0;
}

.flush {
    padding-left: 0;
    border-right: 0;
}

.right-a {
    width: 420px;
    border-left: 1px solid #fff;
    border-right: 0;
}

.right-b {
    width: 332px;
    padding-left: 0;
    border-left: 1px solid #999;
    border-right: 0;
}

.gr-names {
    width: 351px;
}

.gr-times {
    border-right: 0;
}

.gr-time {
    width: 368px;
}

.ic {
    display: block;
    flex: none;
    width: 24px;
    height: 24px;
}

.w36 { width: 36px; }
.w72 { width: 72px; }

.handle {
    width: 2px;
    height: 22px;
    background-color: #aaa;
    border-right: 1px solid #fff;
}

.sep {
    width: 2px;
    height: 26px;
    background-color: #aaa;
    border-right: 1px solid #fff;
}

.raised {
    display: flex;
    align-items: center;
    width: 26px;
    height: 30px;
    border: 1px solid;
    border-color: #fff #999 #fff #999;
    overflow: hidden;
}

.raised .ic {
    margin-left: -3px;
}

.sendto {
    display: flex;
    gap: 5px;
}

.flagbox {
    display: flex;
    align-items: center;
    width: 27px;
}

.flagbox .lab {
    margin: 6px 0 0 -6px;
}

.sel {
    display: flex;
    align-items: center;
    height: 20px;
    padding-left: 2px;
    border: 1px solid #8f8f8f;
    position: relative;
}

.sel .dn {
    position: absolute;
    right: 1px;
}

.w30 { width: 30px; }
.w55 { width: 55px; }
.w62 { width: 62px; }
.w119 { width: 119px; }

.combo {
    display: flex;
    align-items: center;
    height: 22px;
    padding-left: 2px;
    background-color: #fff;
    border-top: 2px solid #8f8f8f;
    border-left: 2px solid #8f8f8f;
    position: relative;
}

.w80 { width: 80px; }
.w100 { width: 100px; }
.w116 { width: 116px; }
.w140 { width: 140px; }

.drop {
    position: absolute;
    right: 2px;
    top: 0;
    width: 13px;
    height: 18px;
    display: flex;
    align-items: center;
    justify-content: center;
    background-color: #d0d0d0;
    border-right: 2px solid #8f8f8f;
    border-bottom: 2px solid #8f8f8f;
}

.main {
    height: 859px;
    display: flex;
    border-top: 2px solid #fff;
    background-color: #e6e6e6;
}

.tabs {
    width: 34px;
    flex: none;
    background: linear-gradient(to right, #e6e6e6 0 6px, #222 6px 7px, #a8a8a8 7px);
}

.tabs-top {
    height: 20px;
    margin-left: 1px;
    margin-bottom: 4px;
    background-color: #8e8e8e;
    display: flex;
    align-items: center;
    justify-content: center;
}

.tabs-ctl {
    width: 30px;
    height: 16px;
}

.tab {
    width: 24px;
    height: 27px;
    margin: 0 0 3px 5px;
    display: flex;
    align-items: center;
    justify-content: center;
    background-color: #e6e6e6;
    border: 1px solid #111;
    border-left: 0;
    border-radius: 0 5px 5px 0;
    box-shadow: inset 1px 1px 0 #fff;
}

.tab .ic {
    width: 18px;
    height: 18px;
}

.tab.active {
    width: 29px;
    height: 34px;
    margin: 0 0 0 2px;
    border-top: 0;
}

.tab.active .ic {
    width: 20px;
    height: 20px;
}

.signals {
    width: 267px;
    flex: none;
    padding-left: 4px;
}

.cursors {
    height: 55px;
    padding-top: 9px;
}

.cur-row {
    height: 18px;
    display: flex;
    align-items: center;
}

.curicon {
    width: 16px;
    height: 16px;
    background-color: #dcdcdc;
    border: 1px solid #fff;
    flex: none;
}

.curicon svg {
    display: block;
    width: 14px;
    height: 14px;
}

.cur-name {
    width: 120px;
    display: flex;
    justify-content: flex-end;
}

.cur-row .dn {
    margin: 0 1px 0 2px;
}

.lists {
    display: flex;
    gap: 6px;
}

.col-name {
    width: 175px;
}

.col-cursor {
    width: 75px;
}

.col-head {
    height: 22px;
    display: flex;
    align-items: center;
    padding-left: 2px;
    background-color: #ababab;
    border: 1px solid #c4c4c4;
    border-right-color: #888;
    border-bottom-color: #888;
}

.gear {
    width: 10px;
    height: 10px;
    flex: none;
    margin-left: auto;
}

.col-head .dn {
    margin: 0 2px 0 3px;
}

.col-body {
    height: 755px;
    overflow: hidden;
    background-color: #000;
    color: #fff;
}

.row {
    display: flex;
    align-items: center;
    height: 26px;
    background-color: #000;
}

.row.alt {
    background-color: #333;
}

.row.grp {
    height: 22px;
    align-items: stretch;
}

.row.first {
    margin-top: -17px;
}

.tree {
    display: block;
    flex: none;
    height: 100%;
}

.tree .dots {
    stroke: #ddd;
    stroke-dasharray: 1 1;
    fill: none;
}

.tree .box {
    stroke: #fff;
}

.fill-blk {
    fill: #000;
}

.fill-alt {
    fill: #333;
}

.more {
    width: 0;
    height: 0;
    margin-right: 1px;
    border-top: 4px solid transparent;
    border-bottom: 4px solid transparent;
    border-right: 5px solid #fff;
}

.more.r {
    margin: 0 0 0 1px;
    border-right: 0;
    border-left: 4px solid #fff;
}

.bar {
    flex: 1;
    min-width: 0;
    height: 18px;
    margin: 2px 0;
    display: flex;
    align-items: center;
    padding-left: 2px;
    background-color: #696969;
}

.val {
    padding-left: 2px;
}

.hscroll {
    height: 25px;
    display: flex;
    align-items: center;
    gap: 2px;
    padding: 0 1px 2px;
    background-color: #b8b8b8;
    border-bottom: 2px solid #fff;
}

.arrow {
    display: block;
    flex: none;
    width: 20px;
    height: 20px;
}

.fill {
    flex: 1;
}

.thumb {
    width: 30px;
    height: 20px;
    flex: none;
    background-color: #e6e6e6;
    border: 1px solid #8a8a8a;
    border-top-color: #fff;
    border-left-color: #fff;
}

.thumb-s {
    width: 10px;
}

.alignbtn {
    width: 19px;
    height: 23px;
    margin-left: auto;
    display: flex;
    align-items: center;
    background-color: #e6e6e6;
}

.alignbtn .gear {
    width: 14px;
    height: 14px;
    margin: 0 auto;
}

.waves {
    width: 1604px;
    flex: none;
    position: relative;
}

.ruler {
    height: 77px;
    position: relative;
    background-color: #000;
}

.ruler svg {
    display: block;
}

.wave-text {
    font: 20px "Liberation Mono", monospace;
    fill: #fff;
}

.flagbar {
    position: absolute;
    display: flex;
    align-items: center;
    height: 17px;
    padding-left: 2px;
    background-color: #f00;
    color: #fff;
}

.baseline {
    left: 1px;
    top: 19px;
    width: 102px;
}

.timea {
    right: 0;
    top: 39px;
    width: 109px;
}

.wave-body {
    height: 755px;
    overflow: hidden;
    background-color: #000;
}

.wrow {
    display: block;
    height: 26px;
    background-color: #000;
}

.wrow.alt {
    background-color: #333;
}

.wrow.grp {
    height: 22px;
}

.wrow.first {
    margin-top: -17px;
}

.wave-scroll {
    gap: 3px;
    border-bottom: 0;
    padding: 1px 0 0 1px;
    position: relative;
}

.wave-thumb {
    flex: 1;
    height: 19px;
    margin-bottom: 3px;
    background-color: #ececec;
    border-top: 2px solid #fff;
    border-bottom: 2px solid #777;
}

.wave-ticks {
    position: absolute;
    left: 24px;
    right: 22px;
    bottom: 0;
    height: 2px;
    background: repeating-linear-gradient(to right, #fff 0 1px, #000 1px 23px);
}

.range-mark {
    position: absolute;
    bottom: 0;
    width: 0;
    height: 0;
    border-left: 6px solid transparent;
    border-right: 6px solid transparent;
    border-bottom: 7px solid #eee;
}

.mark-l {
    left: 17px;
}

.mark-r {
    left: 1575px;
}

.vline {
    position: absolute;
    width: 1px;
    background-color: #f00;
}

.vline-base {
    left: 0;
    top: 19px;
    height: 813px;
}

.vline-cursor {
    left: 1603px;
    top: 55px;
    height: 777px;
}

.vline-range {
    left: 1581px;
    top: 834px;
    height: 16px;
}

.vscroll {
    width: 15px;
    flex: none;
    padding: 77px 0 27px 3px;
    display: flex;
    flex-direction: column;
    align-items: flex-start;
}

.varrow {
    display: block;
    width: 10px;
    height: 14px;
    flex: none;
    transform: rotate(-90deg);
}

.varrow-dn {
    transform: rotate(90deg);
}

.vthumb {
    width: 10px;
    height: 625px;
    flex: none;
    background-color: #dcdcdc;
    border: 1px solid #8a8a8a;
    border-top-color: #fff;
    border-left-color: #fff;
}

.vtrack {
    flex: 1;
    width: 10px;
    background-color: #d4d4d4;
}

.status {
    height: 30px;
    display: flex;
    align-items: center;
    padding-left: 3px;
    background-color: #e6e6e6;
    border-top: 1px solid #aaa;
    border-bottom: 2px solid #aaa;
}

.st-cell {
    width: 21px;
    height: 25px;
    display: flex;
    align-items: center;
    justify-content: center;
    border-right: 1px solid #999;
}

.st-cell .ic {
    width: 19px;
    height: 19px;
}

.st-msg {
    width: 151px;
    height: 25px;
    margin-left: auto;
    padding-left: 3px;
    display: flex;
    align-items: center;
    border-left: 1px solid #999;
}
```

FILE: waves.js
```js
const NS = 5.937;
const X = t => Math.round(t * NS) + 0.5;
const W = 1604;

const PADDR = [['xx', 20], ['EF', 80], ['09', 270]];
const PENABLE = [['x', 20], [0, 100], [1, 140], [0, 200], [1, 220], [0, 270]];
const PWRITE = [['x', 20], [0, 80], [1, 180], [0, 270]];
const PREADY = [['x', 10], [0, 130], [1, 170], [0, 210], [1, 250], [0, 270]];
const RSTN = [['x', 20], [0, 80], [1, 270]];
const PRDATA = [['xxxxxxxx', 210], ['0A1E363D', 270]];

const CLK = [];
for (let t = 0; t < 270; t += 10) CLK.push([(t / 10) % 2, t + 10]);

const sig = (name, lvl, value, wave, last) => ({ type: 'sig', name, lvl, value, wave, last });
const bus = (name, lvl, value, wave, last, mark) => ({ type: 'bus', name, lvl, value, wave, last, mark, box: true });
const chk = (name, value, wave) => ({ type: 'assert', name, lvl: 0, value, wave, box: true });
const grp = (name, text) => ({ type: 'group', name, lvl: 0, text, box: true });

const rows = [
    sig('clk', 0, '1', CLK),
    bus('delay[3:0]', 0, "'h 0", [['0', 270]]),
    bus('paddr[7:0]', 0, "'h 09", PADDR),
    sig('penable', 0, '0', PENABLE),
    chk('when_psel_high', 'inactive', [['inactive', 20], ['disabled', 80], ['inactive', 100], ['active', 120], ['finished', 140], ['inactive', 200], ['active', 220], ['finished', 240], ['inactive', 270]]),
    grp('h contributors', 'simulator::hw_top.intf.penable_high_after_one_cycle_when_psel_high contributors'),
    bus('psel[1:0]', 1, "'h 0", [['x', 20], ['1', 40], ['0', 80], ['1', 140], ['0', 180], ['1', 220], ['0', 270]]),
    bus('paddr[7:0]', 1, "'h 09", PADDR),
    sig('pwrite', 1, '0', PWRITE),
    bus('pwdata[31:0]', 1, "'h xxxx>", [['xxxxxxxx', 80], ['0A1E363D', 140], ['xxxxxxxx', 270]]),
    sig('penable', 1, '0', PENABLE),
    sig('rstn', 1, '1', RSTN, true),
    bus('prdata[31:0]', 0, "'h xxxx>", PRDATA, false, true),
    chk('en_pwrite_high', 'inactive', [['inactive', 20], ['disabled', 80], ['inactive', 150], ['finished', 190], ['inactive', 270]]),
    grp('h contributors', 'simulator::hw_top.intf.prdata_is_X_when_pwrite_high contributors'),
    sig('pwrite', 1, '0', PWRITE),
    sig('pready', 1, '0', PREADY),
    bus('prdata[31:0]', 1, "'h xxxx>", PRDATA, false, true),
    sig('rstn', 1, '1', RSTN, true),
    chk('when_write_low', 'finished', [['inactive', 20], ['disabled', 80], ['inactive', 230], ['finished', 270]]),
    grp('w contributors', 'simulator::hw_top.intf.prdata_valid_when_write_low contributors'),
    sig('pwrite', 1, '0', PWRITE),
    sig('pready', 1, '0', PREADY),
    bus('prdata[31:0]', 1, "'h xxxx>", PRDATA, false, true),
    sig('rstn', 1, '1', RSTN, true),
    sig('pready', 0, '0', PREADY),
    chk('le_is_asserted', 'inactive', [['inactive', 20], ['disabled', 80], ['inactive', 110], ['active', 150], ['finished', 170], ['inactive', 210], ['active', 230], ['finished', 250], ['inactive', 270]]),
    grp('d contributors', 'simulator::hw_top.intf.pready_high_after_N_clockcycles_of_penable_is_asserted contributors'),
    sig('penable', 1, '0', PENABLE),
    sig('rstn', 1, '1', RSTN),
    sig('pready', 1, '0', PREADY)
];

const txt = (x, y, s) => `<text class="wave-text" x="${x}" y="${y}" textLength="${s.length * 8}" lengthAdjust="spacingAndGlyphs" xml:space="preserve">${s}</text>`;
const lab = s => `<span class="lab">${s}</span>`;

function digital(wave) {
    let red = '', green = '', from = 0, level = null;
    wave.forEach(([v, end]) => {
        const a = X(from), b = X(end);
        if (v === 'x') {
            red += `M${a} 2.500H${b}V23.500H${a}`;
        } else {
            const y = v ? 2.5 : 23.5;
            if (level !== null && level !== v) green += `M${a} 2.500V23.500`;
            green += `M${a} ${y}H${b}`;
            level = v;
        }
        from = end;
    });
    return `<path d="${red}" fill="none" stroke="#f00"/><path d="${green}" fill="none" stroke="#0f0"/>`;
}

function buses(wave) {
    let s = '', from = 0;
    wave.forEach(([v, end]) => {
        const a = X(from), b = X(end);
        if (v[0] === 'x') {
            s += `<path d="M${a} 2.500H${b}V23.500H${a}" fill="none" stroke="#f00"/>` + txt(a + 2, 19, v);
        } else {
            s += `<path d="M${a + 3} 2.500H${b - 3}L${b - 1} 5.500V20.500L${b - 3} 23.500H${a + 3}L${a + 1} 20.500V5.500Z" fill="none" stroke="#0f0"/>` + txt(a + 5, 19, v);
        }
        from = end;
    });
    return s;
}

function wave(r) {
    if (r.type === 'group') return txt(1, 17, r.text);
    const drawn = r.type === 'sig' ? digital(r.wave) : buses(r.wave);
    const mark = r.mark ? `<rect x="${W - 4}" y="18" width="4" height="6" fill="#ff0"/>` : '';
    return drawn + mark;
}

function tree(r, h) {
    const m = h / 2, base = 9.5, kid = 17.5;
    const at = r.lvl ? kid : base;
    const icon = { sig: 'i-sig', bus: 'i-bus', assert: 'i-assert', group: 'i-group' }[r.type];
    const iconX = (r.type === 'bus' ? 20 : 21) + r.lvl * 8;
    let d = `M${base} 0V${h}`;
    if (r.lvl) d += `M${kid} 0V${r.last ? m : h}`;
    d += `M${at} ${m}H${iconX + 4}`;
    let box = '';
    if (r.box) {
        const sign = r.type === 'group' ? '' : `M${at} ${m - 2}V${m + 2}`;
        box = `<rect x="${at - 4}" y="${m - 4}" width="8" height="8" class="${r.bg}"/><path class="box" d="M${at - 4} ${m - 4}h8v8h-8zM${at - 2} ${m}h4${sign}" fill="none"/>`;
    }
    const w = 46 + r.lvl * 8;
    return `<svg class="tree" width="${w}" height="${h}"><path class="dots" d="${d}"/>${box}<use href="#${icon}" x="${iconX}" y="${m - 12}" width="24" height="24"/></svg>`;
}

const names = document.getElementById('names');
const values = document.getElementById('values');
const waves = document.getElementById('waves');
let nameHtml = '', valueHtml = '', waveHtml = '';

rows.forEach((r, i) => {
    const alt = Math.floor(i / 3) % 2 === 1;
    const cls = (alt ? ' alt' : '') + (r.type === 'group' ? ' grp' : '') + (i === 0 ? ' first' : '');
    const h = r.type === 'group' ? 22 : 26;
    r.bg = alt ? 'fill-alt' : 'fill-blk';

    let label = lab(r.name);
    if (r.type === 'assert') label = '<i class="more"></i>' + label;
    if (r.type === 'group') label = '<span class="bar"><i class="more"></i>' + label + '</span>';
    nameHtml += `<div class="row${cls}">${tree(r, h)}${label}</div>`;

    let value = '';
    if (r.type === 'group') {
        value = '<span class="bar"></span>';
    } else if (r.value.endsWith('>')) {
        value = `<span class="val">${lab(r.value.slice(0, -1))}</span><i class="more r"></i>`;
    } else {
        value = `<span class="val">${lab(r.value)}</span>`;
    }
    valueHtml += `<div class="row${cls}">${value}</div>`;

    const bar = r.type === 'group' ? `<rect y="2" width="${W}" height="18" fill="#696969"/>` : '';
    waveHtml += `<svg class="wrow${cls}" width="${W}" height="${h}">${bar}${wave(r)}</svg>`;
});

names.innerHTML = nameHtml;
values.innerHTML = valueHtml;
waves.innerHTML = waveHtml;

// time ruler above the waves
let axis = '';
for (let t = 0; t <= 270; t += 2) {
    const x = X(t);
    if (t % 10 === 0) {
        if (t < 270) {
            axis += `<path d="M${x} 56V77" stroke="#fff"/>`;
            axis += txt(x + 2, 70, t === 0 ? '0' : t + 'ns');
        }
    } else {
        axis += `<path d="M${x} 73V76" stroke="#fff"/>`;
    }
}
axis += `<path d="M0 76.500H${W}" stroke="#eee"/>`;
document.getElementById('ruler').insertAdjacentHTML('afterbegin', `<svg width="${W}" height="77">${axis}</svg>`);

// labels sit in an 8px character grid
document.querySelectorAll('.lab').forEach(el => {
    el.style.width = el.textContent.length * 8 + 'px';
});
```
